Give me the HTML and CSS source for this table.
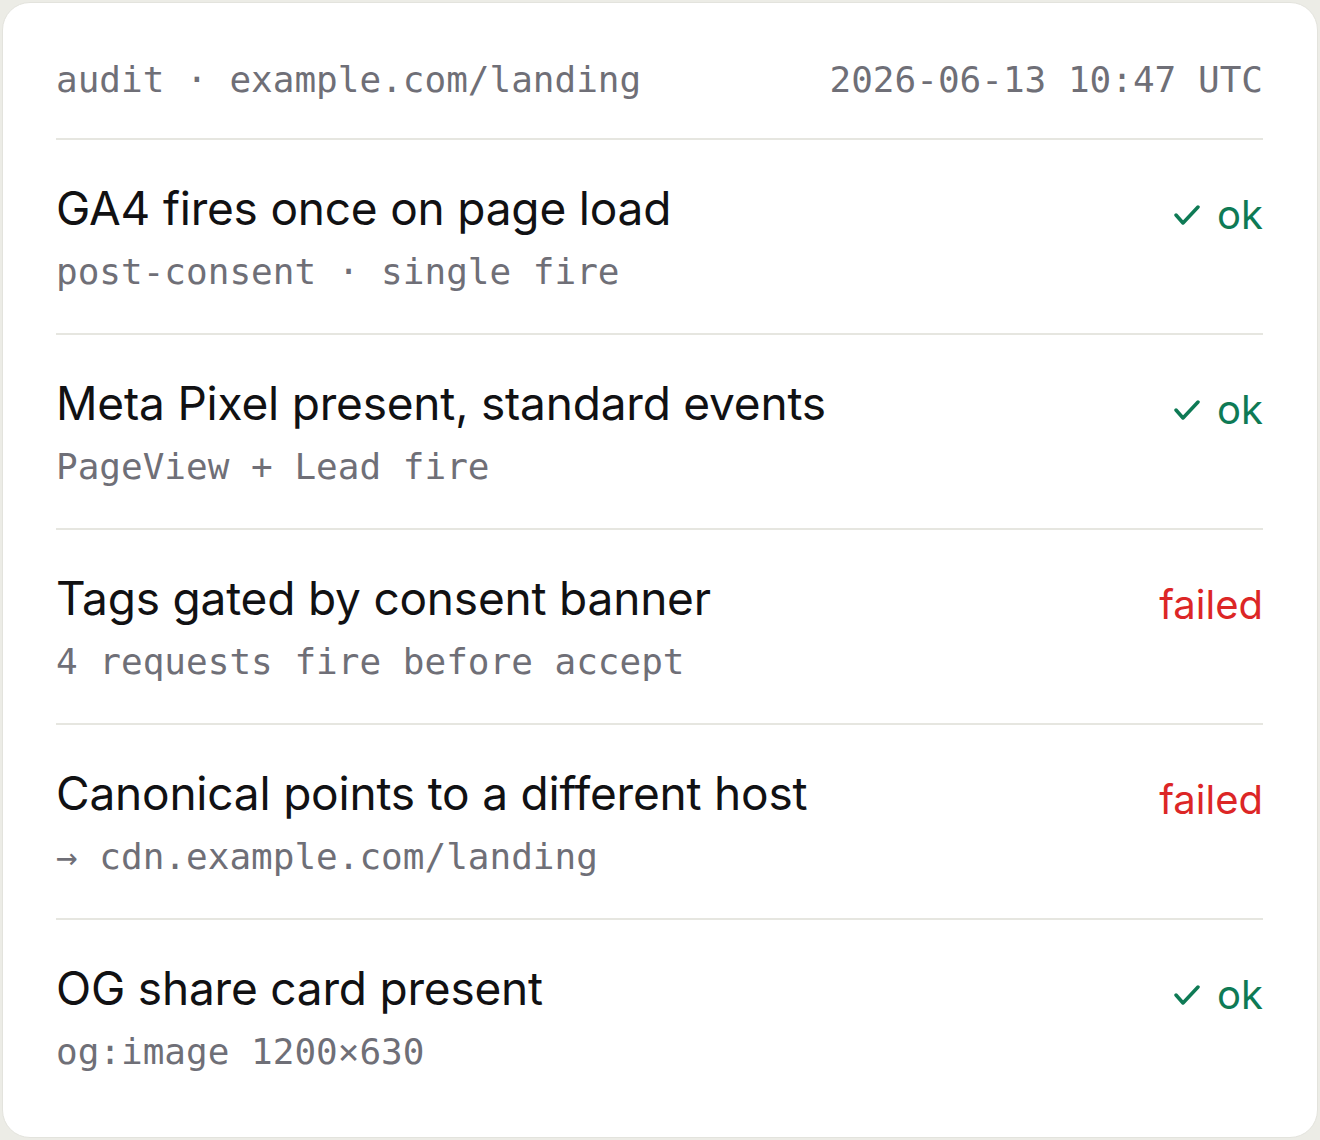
FILE: index.html
```html
<!DOCTYPE html>
<html lang="en">
<head>
  <meta charset="UTF-8" />
  <meta name="viewport" content="width=device-width, initial-scale=1.0" />
  <title>Audit · example.com/landing</title>
  <link rel="stylesheet" href="styles.css">
</head>
<body>
  <div class="audit-card">
    <div class="audit-head">
      <span>audit · example.com/landing</span>
      <span>2026-06-13 10:47 UTC</span>
    </div>

    <div class="check-row">
      <div class="check-text">
        <div class="check-title">GA4 fires once on page load</div>
        <div class="check-sub">post-consent · single fire</div>
      </div>
      <div class="status ok">
        <svg viewBox="0 0 26 22" width="26" height="22"><polyline points="2,11 9,19 24,3" /></svg>
        ok
      </div>
    </div>

    <div class="check-row">
      <div class="check-text">
        <div class="check-title">Meta Pixel present, standard events</div>
        <div class="check-sub">PageView + Lead fire</div>
      </div>
      <div class="status ok">
        <svg viewBox="0 0 26 22" width="26" height="22"><polyline points="2,11 9,19 24,3" /></svg>
        ok
      </div>
    </div>

    <div class="check-row">
      <div class="check-text">
        <div class="check-title">Tags gated by consent banner</div>
        <div class="check-sub">4 requests fire before accept</div>
      </div>
      <div class="status failed">failed</div>
    </div>

    <div class="check-row">
      <div class="check-text">
        <div class="check-title">Canonical points to a different host</div>
        <div class="check-sub">→ cdn.example.com/landing</div>
      </div>
      <div class="status failed">failed</div>
    </div>

    <div class="check-row">
      <div class="check-text">
        <div class="check-title">OG share card present</div>
        <div class="check-sub">og:image 1200×630</div>
      </div>
      <div class="status ok">
        <svg viewBox="0 0 26 22" width="26" height="22"><polyline points="2,11 9,19 24,3" /></svg>
        ok
      </div>
    </div>
  </div>
</body>
</html>
```

FILE: styles.css
```css
* { margin: 0; padding: 0; box-sizing: border-box; }
body {
  background: #ecece6;
  padding: 2px;
  font-family: Inter, 'Noto Sans', sans-serif;
}
.audit-card {
  background: #ffffff;
  border: 1px solid #e3e3dd;
  border-radius: 28px;
  height: 1136px;
  padding: 52px 54px 0 53px;
}
.audit-head {
  display: flex;
  justify-content: space-between;
  font-family: 'DejaVu Sans Mono', 'Liberation Mono', monospace;
  font-size: 36px;
  line-height: 50px;
  color: #6f6f77;
  padding-bottom: 33px;
  border-bottom: 2px solid #e6e6e0;
}
.check-row {
  display: flex;
  justify-content: space-between;
  align-items: flex-start;
  padding: 38px 0 36px;
  border-bottom: 2px solid #e6e6e0;
}
.check-row:last-child { border-bottom: none; }
.check-title {
  font-size: 46px;
  line-height: 60px;
  color: #111113;
  letter-spacing: -0.2px;
}
.check-sub {
  font-family: 'DejaVu Sans Mono', 'Liberation Mono', monospace;
  font-size: 36px;
  line-height: 50px;
  color: #6f6f77;
  margin-top: 9px;
}
.status {
  display: flex;
  align-items: center;
  gap: 17px;
  font-size: 40px;
  line-height: 60px;
  margin-top: 7px;
}
.status.ok { color: #0e7a55; }
.status.failed { color: #dc2626; }
.status svg polyline {
  fill: none;
  stroke: #0e7a55;
  stroke-width: 3.5;
  stroke-linecap: round;
  stroke-linejoin: round;
}
```
